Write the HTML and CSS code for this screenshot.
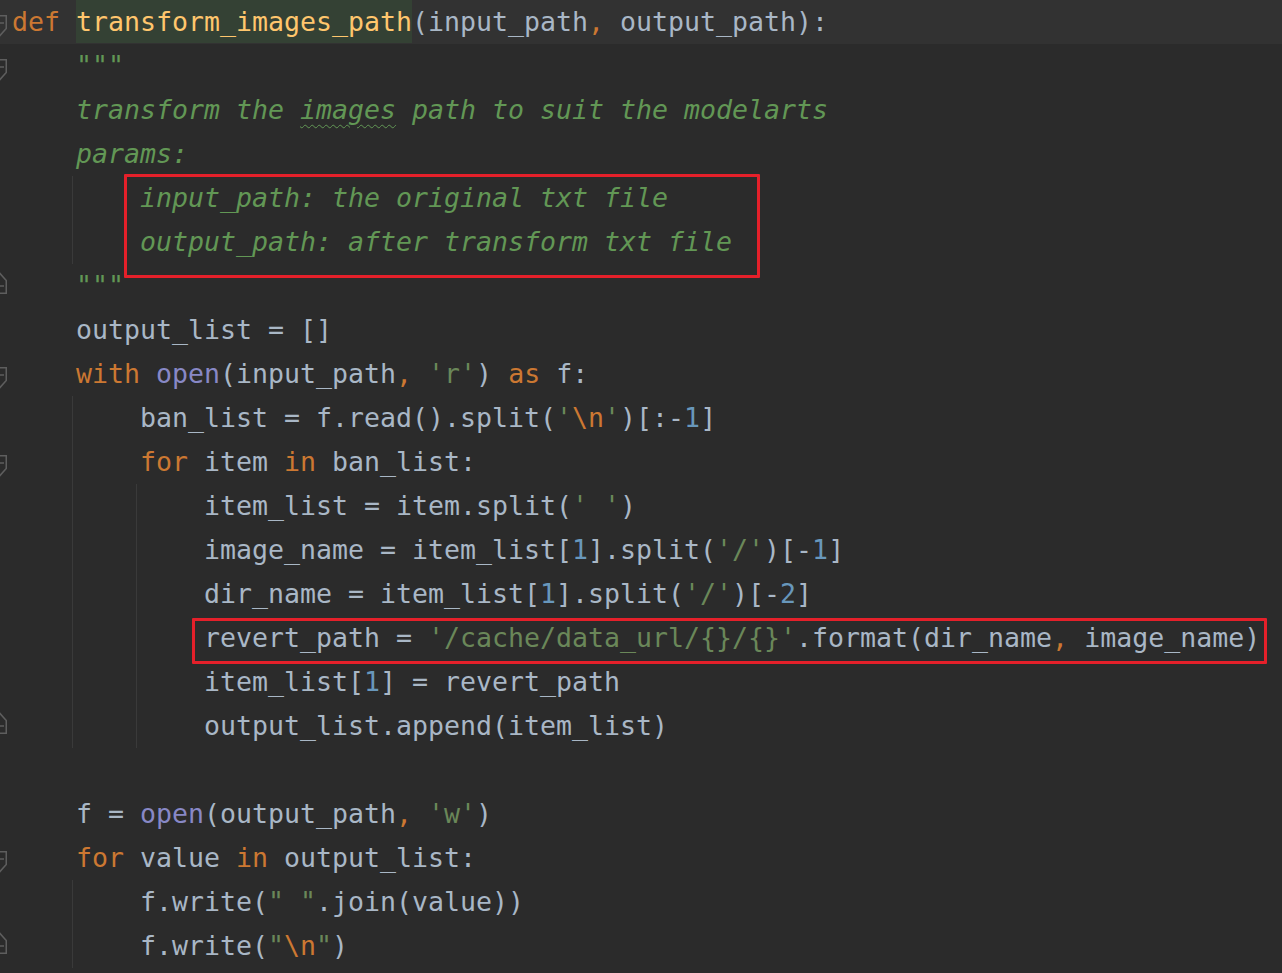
FILE: index.html
```html
<!DOCTYPE html>
<html>
<head>
<meta charset="utf-8">
<link rel="stylesheet" href="styles.css">
</head>
<body>
<div class="editor">
  <div class="row cur"><span class="gut"><svg class="fold fs" viewBox="0 0 14 22"><path d="M0.75 0.75H13.25V13.5L7 20.5L0.75 13.5Z M3 8H11"/></svg></span><span class="code"><span class="k">def</span> <span class="fn">transform_images_path</span>(input_path<span class="k">,</span> output_path):</span></div>
  <div class="row"><span class="gut"><svg class="fold fs" viewBox="0 0 14 22"><path d="M0.75 0.75H13.25V13.5L7 20.5L0.75 13.5Z M3 8H11"/></svg></span><span class="ind"></span><span class="code d">"""</span></div>
  <div class="row"><span class="gut"></span><span class="ind"></span><span class="code d">transform the <span class="typo">images</span> path to suit the modelarts</span></div>
  <div class="row"><span class="gut"></span><span class="ind"></span><span class="code d">params:</span></div>
  <div class="row"><span class="gut"></span><span class="ind g"></span><span class="ind"></span><span class="code d">input_path: the original txt file</span></div>
  <div class="row"><span class="gut"></span><span class="ind g"></span><span class="ind"></span><span class="code d">output_path: after transform txt file</span></div>
  <div class="row"><span class="gut"><svg class="fold fe" viewBox="0 0 14 22"><path d="M0.75 21.25H13.25V8.5L7 1.5L0.75 8.5Z M3 14H11"/></svg></span><span class="ind"></span><span class="code d">"""</span></div>
  <div class="row"><span class="gut"></span><span class="ind"></span><span class="code">output_list = []</span></div>
  <div class="row"><span class="gut"><svg class="fold fs" viewBox="0 0 14 22"><path d="M0.75 0.75H13.25V13.5L7 20.5L0.75 13.5Z M3 8H11"/></svg></span><span class="ind"></span><span class="code"><span class="k">with</span> <span class="b">open</span>(input_path<span class="k">,</span> <span class="s">'r'</span>) <span class="k">as</span> f:</span></div>
  <div class="row"><span class="gut"></span><span class="ind g"></span><span class="ind"></span><span class="code">ban_list = f.read().split(<span class="s">'</span><span class="k">\n</span><span class="s">'</span>)[:-<span class="n">1</span>]</span></div>
  <div class="row"><span class="gut"><svg class="fold fs" viewBox="0 0 14 22"><path d="M0.75 0.75H13.25V13.5L7 20.5L0.75 13.5Z M3 8H11"/></svg></span><span class="ind g"></span><span class="ind"></span><span class="code"><span class="k">for</span> item <span class="k">in</span> ban_list:</span></div>
  <div class="row"><span class="gut"></span><span class="ind g"></span><span class="ind g"></span><span class="ind"></span><span class="code">item_list = item.split(<span class="s">' '</span>)</span></div>
  <div class="row"><span class="gut"></span><span class="ind g"></span><span class="ind g"></span><span class="ind"></span><span class="code">image_name = item_list[<span class="n">1</span>].split(<span class="s">'/'</span>)[-<span class="n">1</span>]</span></div>
  <div class="row"><span class="gut"></span><span class="ind g"></span><span class="ind g"></span><span class="ind"></span><span class="code">dir_name = item_list[<span class="n">1</span>].split(<span class="s">'/'</span>)[-<span class="n">2</span>]</span></div>
  <div class="row"><span class="gut"></span><span class="ind g"></span><span class="ind g"></span><span class="ind"></span><span class="code">revert_path = <span class="s">'/cache/data_url/{}/{}'</span>.format(dir_name<span class="k">,</span> image_name)</span></div>
  <div class="row"><span class="gut"></span><span class="ind g"></span><span class="ind g"></span><span class="ind"></span><span class="code">item_list[<span class="n">1</span>] = revert_path</span></div>
  <div class="row"><span class="gut"><svg class="fold fe" viewBox="0 0 14 22"><path d="M0.75 21.25H13.25V8.5L7 1.5L0.75 8.5Z M3 14H11"/></svg></span><span class="ind g"></span><span class="ind g"></span><span class="ind"></span><span class="code">output_list.append(item_list)</span></div>
  <div class="row"><span class="gut"></span></div>
  <div class="row"><span class="gut"></span><span class="ind"></span><span class="code">f = <span class="b">open</span>(output_path<span class="k">,</span> <span class="s">'w'</span>)</span></div>
  <div class="row"><span class="gut"><svg class="fold fs" viewBox="0 0 14 22"><path d="M0.75 0.75H13.25V13.5L7 20.5L0.75 13.5Z M3 8H11"/></svg></span><span class="ind"></span><span class="code"><span class="k">for</span> value <span class="k">in</span> output_list:</span></div>
  <div class="row"><span class="gut"></span><span class="ind g"></span><span class="ind"></span><span class="code">f.write(<span class="s">" "</span>.join(value))</span></div>
  <div class="row"><span class="gut"><svg class="fold fe" viewBox="0 0 14 22"><path d="M0.75 21.25H13.25V8.5L7 1.5L0.75 8.5Z M3 14H11"/></svg></span><span class="ind g"></span><span class="ind"></span><span class="code">f.write(<span class="s">"</span><span class="k">\n</span><span class="s">"</span>)</span></div>
  <div class="row"><span class="gut"></span></div>

  <div class="mark mark-doc"></div>
  <div class="mark mark-revert"></div>
</div>
</body>
</html>
```

FILE: styles.css
```css
html, body {
  margin: 0;
  padding: 0;
  background: #2b2b2b;
}

body {
  width: 1282px;
  height: 973px;
  overflow: hidden;
}

.editor {
  position: relative;
  font-family: "DejaVu Sans Mono", "Liberation Mono", monospace;
  font-size: 26.58px;
  color: #a9b7c6;
}

.row {
  display: flex;
  height: 44px;
  line-height: 44px;
}

.row.cur {
  background: #323232;
}

.code {
  white-space: pre;
}

.gut {
  flex: 0 0 12px;
  width: 12px;
  height: 44px;
}

.fold {
  display: block;
  width: 14px;
  height: 22px;
  margin-left: -7px;
  fill: none;
  stroke: #5e5e5e;
  stroke-width: 1.5;
}

.fold.fs {
  margin-top: 15px;
}

.fold.fe {
  margin-top: 8px;
}

.ind {
  flex: 0 0 64px;
  width: 64px;
  height: 44px;
}

.ind.g {
  background: linear-gradient(to right, transparent 60px, #3a3a3a 60px, #3a3a3a 61px, transparent 61px);
}

.k { color: #cc7832; }
.fn {
  display: inline-block;
  height: 43px;
  color: #ffc66d;
  background: #344134;
}
.d { color: #629755; font-style: italic; }
.s { color: #6a8759; }
.b { color: #8888c6; }
.n { color: #6897bb; }

.typo {
  text-decoration: underline wavy #629755;
  text-decoration-thickness: 1px;
  text-underline-offset: 5px;
}

.mark {
  position: absolute;
  border: 3px solid #e5202a;
  border-radius: 1px;
  box-sizing: border-box;
}

.mark-doc {
  left: 124px;
  top: 174px;
  width: 636px;
  height: 104px;
}

.mark-revert {
  left: 192px;
  top: 618px;
  width: 1075px;
  height: 46px;
}
```
